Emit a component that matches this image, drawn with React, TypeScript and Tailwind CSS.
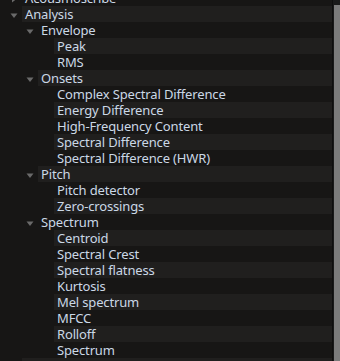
import React from 'react';

type Node = { label: string; open?: boolean; children?: Node[] };

const tree: Node[] = [
  { label: 'Acousmoscribe' },
  {
    label: 'Analysis',
    open: true,
    children: [
      { label: 'Envelope', open: true, children: [{ label: 'Peak' }, { label: 'RMS' }] },
      {
        label: 'Onsets',
        open: true,
        children: [
          { label: 'Complex Spectral Difference' },
          { label: 'Energy Difference' },
          { label: 'High-Frequency Content' },
          { label: 'Spectral Difference' },
          { label: 'Spectral Difference (HWR)' },
        ],
      },
      { label: 'Pitch', open: true, children: [{ label: 'Pitch detector' }, { label: 'Zero-crossings' }] },
      {
        label: 'Spectrum',
        open: true,
        children: [
          { label: 'Centroid' },
          { label: 'Spectral Crest' },
          { label: 'Spectral flatness' },
          { label: 'Kurtosis' },
          { label: 'Mel spectrum' },
          { label: 'MFCC' },
          { label: 'Rolloff' },
          { label: 'Spectrum' },
        ],
      },
    ],
  },
  { label: 'Audio' },
];

type Row = { label: string; depth: number; branch: 'open' | 'closed' | 'leaf' };

const flatten = (nodes: Node[], depth: number, out: Row[]) => {
  nodes.forEach((n) => {
    const branch = n.children ? (n.open ? 'open' : 'closed') : depth === 0 ? 'closed' : 'leaf';
    out.push({ label: n.label, depth, branch });
    if (n.children && n.open) flatten(n.children, depth + 1, out);
  });
  return out;
};

const pad = ['pl-0', 'pl-4', 'pl-8'];

const Arrow: React.FC<{ open: boolean }> = ({ open }) => (
  <svg width="8" height="8" viewBox="0 0 8 8" className="shrink-0">
    {open ? <path d="M0.5 2.5h7l-3.5 4.5z" fill="#6a6a6a" /> : <path d="M2 0.5v7l4.5-3.5z" fill="#6a6a6a" />}
  </svg>
);

export default function App() {
  const rows = flatten(tree, 0, []);
  return (
    <div
      className="w-[340px] h-[361px] overflow-hidden bg-[#171615] flex text-[13px] tracking-[-0.15px] text-[#cbd8e6]"
      style={{ fontFamily: '"Noto Sans", "Open Sans", sans-serif' }}
    >
      <div className="flex-1 flex flex-col -mt-[10px]">
        {rows.map((r, i) => (
          <div key={i} className={`flex h-4 shrink-0 ${pad[r.depth]}`}>
            <div className="w-[22px] flex items-center justify-center pl-[5px] pt-[1px] shrink-0">
              {r.branch !== 'leaf' && <Arrow open={r.branch === 'open'} />}
            </div>
            <div className={`flex-1 flex items-center pl-[3px] leading-4 overflow-hidden ${i % 2 === 1 ? 'bg-[#201f1e]' : ''}`}>
              {r.label === 'Audio' ? (
                <span className="w-[3px] h-[4px] bg-[#e8900c] ml-[8px] mt-[10px]" />
              ) : (
                <span className="whitespace-nowrap leading-4">{r.label}</span>
              )}
            </div>
          </div>
        ))}
      </div>
      <div className="w-[8px] shrink-0 flex flex-col bg-[#1a1a1a] border-l border-[#0e0e0e]">
        <div className="h-[5px]" />
        <div className="flex-1 bg-[#7b7b7b] ml-[1px]" />
      </div>
    </div>
  );
}
